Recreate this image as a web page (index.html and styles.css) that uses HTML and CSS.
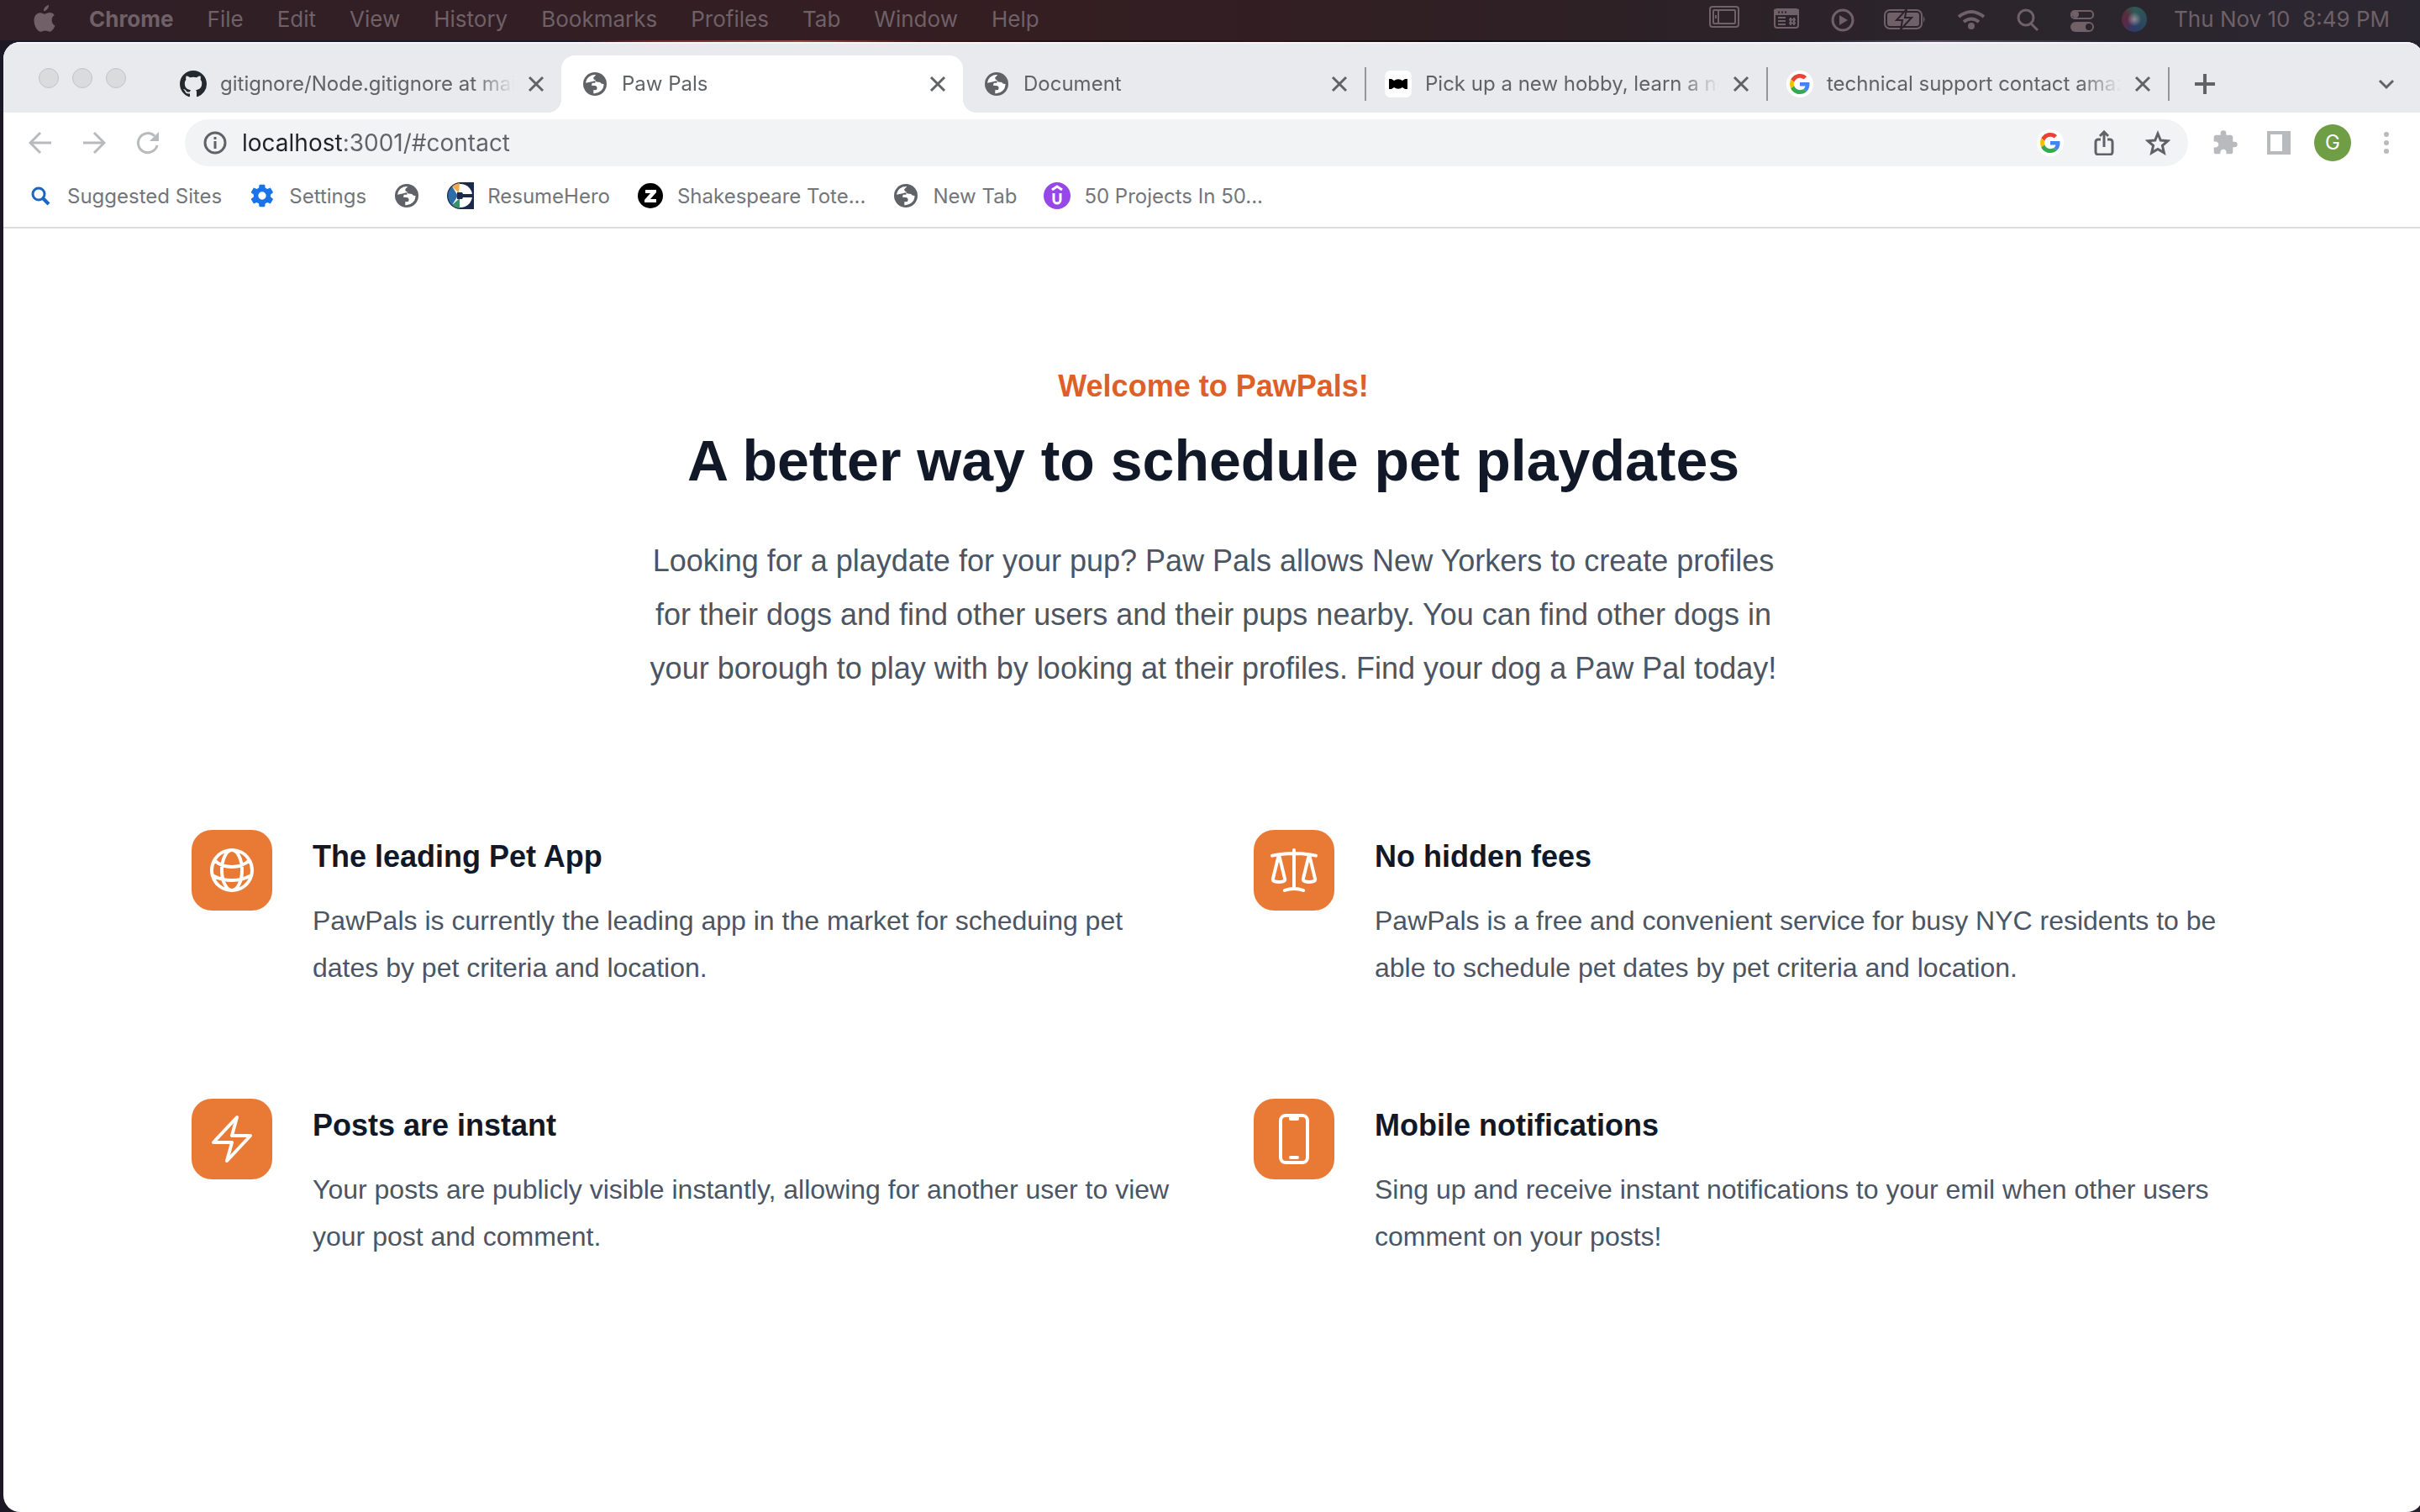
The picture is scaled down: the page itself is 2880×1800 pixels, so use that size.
FILE: index.html
```html
<!DOCTYPE html>
<html lang="en">
<head>
<meta charset="utf-8">
<title>Paw Pals</title>
<link rel="stylesheet" href="styles.css">
</head>
<body>
<svg class="sprite" aria-hidden="true">
  <symbol id="globe" viewBox="0 0 24 24"><circle cx="12" cy="12" r="10.500"/><path fill="#fff" d="M3.800 11A8.300 8.300 0 0 1 13 3.800L10.700 6.200q-.2 2 1.800 2.300l-.2 2.500H9.500l-.5 2.300 3 .2q2 .2 2 2l-.5 1.700-2.800.3v2.900a8.300 8.300 0 0 0 9.200-8.400q-2.500.2-3.200-1.500l-3-.4-2-1-3.500 1z"/></symbol>
  <symbol id="close" viewBox="0 0 20 20"><path d="M2 2l16 16M18 2L2 18" fill="none" stroke="currentColor" stroke-width="3"/></symbol>
  <symbol id="google" viewBox="0 0 48 48"><path fill="#ea4335" d="M24 9.500c3.540 0 6.710 1.220 9.210 3.600l6.850-6.850C35.900 2.380 30.470 0 24 0 14.620 0 6.510 5.380 2.560 13.220l7.980 6.190C12.430 13.720 17.740 9.500 24 9.500z"/><path fill="#4285f4" d="M46.980 24.550c0-1.570-.15-3.090-.38-4.550H24v9.020h12.940c-.58 2.960-2.260 5.480-4.780 7.180l7.730 6c4.510-4.180 7.090-10.360 7.090-17.650z"/><path fill="#fbbc05" d="M10.530 28.590c-.48-1.450-.76-2.990-.76-4.590s.27-3.140.76-4.590l-7.980-6.190C.92 16.460 0 20.120 0 24s.92 7.540 2.560 10.780l7.970-6.190z"/><path fill="#34a853" d="M24 48c6.480 0 11.930-2.130 15.890-5.810l-7.730-6c-2.150 1.450-4.920 2.300-8.160 2.300-6.260 0-11.570-4.220-13.470-9.910l-7.980 6.190C6.510 42.620 14.620 48 24 48z"/></symbol>
</svg>

<header class="menubar">
  <nav class="menus" aria-label="Menu bar">
    <svg class="apple" viewBox="0 0 26 32"><path d="M18 0c.2 3.200-2.600 7-6 7.200C11.700 4 14.600.5 18 0zM25.500 24.600c-1.200 3.200-3.700 7.200-6.200 7.200-2 0-2.800-1.200-5.300-1.200s-3.500 1.200-5.300 1.200C4.600 31.800.5 24.600.5 18.400c0-5.600 3.300-9.200 7.200-9.200 2.300 0 4.100 1.500 5.600 1.500 1.400 0 3.500-1.600 6.200-1.600 2 0 4 1 5.300 2.900-4.700 2.800-4 10.400.7 12.600z"/></svg>
    <button class="menu app-name">Chrome</button>
    <button class="menu">File</button>
    <button class="menu">Edit</button>
    <button class="menu">View</button>
    <button class="menu">History</button>
    <button class="menu">Bookmarks</button>
    <button class="menu">Profiles</button>
    <button class="menu">Tab</button>
    <button class="menu">Window</button>
    <button class="menu">Help</button>
  </nav>
  <div class="status">
    <svg width="46" height="40" viewBox="0 0 46 40" fill="none" stroke="currentColor" stroke-width="2"><rect x="6" y="5" width="34" height="24" rx="3"/><rect x="10" y="9" width="26" height="16" rx="1"/><path d="M16 9v16M13 15v4"/></svg>
    <svg width="40" height="40" viewBox="0 0 40 40" fill="none" stroke="currentColor" stroke-width="2"><rect x="5" y="8" width="28" height="22" rx="3"/><path d="M5 9h28v5H5z" fill="currentColor"/><path d="M9 11.500h2M13 11.500h2M17 11.500h2" stroke="#2c232b"/><path d="M9 18h9M9 22h9M9 26h9M22 20.500h8M22 24.500h8M24 18v9M28 18v9"/></svg>
    <svg width="28" height="40" viewBox="0 0 28 40"><circle cx="14" cy="21" r="12" fill="none" stroke="currentColor" stroke-width="3"/><path d="M10 15l10 6-10 6z" fill="currentColor"/></svg>
    <svg width="56" height="40" viewBox="0 0 56 40"><rect x="4" y="9" width="44" height="22" rx="6" fill="none" stroke="currentColor" stroke-width="2"/><rect x="7" y="12" width="38" height="16" rx="3" fill="currentColor"/><path d="M50 16q3 4 0 8z" fill="currentColor"/><path d="M30 8L18 21h7l-2 11 13-14h-8z" fill="currentColor" class="bolt-cut"/></svg>
    <svg width="38" height="40" viewBox="0 0 38 40" fill="none" stroke="currentColor" stroke-width="4"><path d="M4 17q15-12 30 0M10 23q9-7 18 0"/><circle cx="19" cy="28" r="2"/></svg>
    <svg width="34" height="40" viewBox="0 0 34 40" fill="none" stroke="currentColor" stroke-width="3"><circle cx="14" cy="18" r="9"/><path d="M20 25l8 8"/></svg>
    <svg width="30" height="40" viewBox="0 0 30 40"><rect x="2" y="10" width="26" height="9" rx="4" fill="none" stroke="currentColor" stroke-width="2"/><circle cx="7" cy="14" r="4" fill="currentColor"/><rect x="1" y="23" width="28" height="12" rx="6" fill="currentColor"/><circle cx="23" cy="29" r="4" fill="#2c232b"/></svg>
    <span class="siri"></span>
    <time class="clock">Thu Nov 10&nbsp; 8:49 PM</time>
  </div>
</header>

<div class="window">
  <div class="tabstrip">
    <div class="lights"><i></i><i></i><i></i></div>
    <div class="tabs">
      <div class="tab">
        <svg class="favicon github" viewBox="0 0 16 16"><path d="M8 0C3.580 0 0 3.580 0 8c0 3.540 2.290 6.530 5.470 7.590.4.070.55-.17.55-.38 0-.19-.01-.82-.01-1.490-2.010.37-2.530-.49-2.690-.94-.09-.23-.48-.94-.82-1.130-.28-.15-.68-.52-.01-.53.63-.01 1.080.58 1.230.82.72 1.210 1.870.87 2.330.66.070-.52.28-.87.51-1.070-1.780-.2-3.640-.89-3.640-3.950 0-.87.31-1.590.82-2.150-.08-.2-.36-1.020.08-2.120 0 0 .67-.21 2.200.82.64-.18 1.320-.27 2-.27s1.360.09 2 .27c1.530-1.040 2.200-.82 2.200-.82.44 1.100.16 1.920.08 2.120.51.56.82 1.270.82 2.150 0 3.070-1.870 3.750-3.650 3.950.29.25.54.73.54 1.480 0 1.070-.01 1.930-.01 2.200 0 .21.15.46.55.38A8.010 8.010 0 0016 8c0-4.420-3.580-8-8-8z"/></svg>
        <span class="title">gitignore/Node.gitignore at mai</span>
        <button class="x" aria-label="Close tab"><svg viewBox="0 0 20 20"><use href="#close"/></svg></button>
      </div>
      <div class="tab active">
        <svg class="favicon"><use href="#globe"/></svg>
        <span class="title">Paw Pals</span>
        <button class="x" aria-label="Close tab"><svg viewBox="0 0 20 20"><use href="#close"/></svg></button>
      </div>
      <div class="tab ruled">
        <svg class="favicon"><use href="#globe"/></svg>
        <span class="title">Document</span>
        <button class="x" aria-label="Close tab"><svg viewBox="0 0 20 20"><use href="#close"/></svg></button>
      </div>
      <div class="tab ruled">
        <svg class="favicon" viewBox="0 0 32 32"><rect width="32" height="32" rx="7" fill="#fff"/><path d="M5 10h3l3 2a7 6 0 0 1 10 0l3-2h3v12h-3l-3-2a7 6 0 0 1-10 0l-3 2H5z" fill="#000"/></svg>
        <span class="title">Pick up a new hobby, learn a ne</span>
        <button class="x" aria-label="Close tab"><svg viewBox="0 0 20 20"><use href="#close"/></svg></button>
      </div>
      <div class="tab ruled">
        <svg class="favicon" viewBox="0 0 32 32"><circle cx="16" cy="16" r="16" fill="#fff"/><use href="#google" x="4" y="4" width="24" height="24"/></svg>
        <span class="title">technical support contact amaz</span>
        <button class="x" aria-label="Close tab"><svg viewBox="0 0 20 20"><use href="#close"/></svg></button>
      </div>
    </div>
    <button class="tool" aria-label="New tab"><svg width="24" height="24" viewBox="0 0 24 24"><path d="M12 0v24M0 12h24" stroke="currentColor" stroke-width="4"/></svg></button>
    <button class="tool last" aria-label="Search tabs"><svg width="20" height="14" viewBox="0 0 20 14"><path d="M2 3l8 8 8-8" fill="none" stroke="currentColor" stroke-width="3"/></svg></button>
  </div>

  <div class="toolbar">
    <button class="tool dim" aria-label="Back"><svg width="28" height="28" viewBox="0 0 28 28" fill="none" stroke="currentColor" stroke-width="3"><path d="M27 14H3M14 2L2 14l12 12"/></svg></button>
    <button class="tool dim" aria-label="Forward"><svg width="28" height="28" viewBox="0 0 28 28" fill="none" stroke="currentColor" stroke-width="3"><path d="M1 14h24M14 2l12 12-12 12"/></svg></button>
    <button class="tool dim" aria-label="Reload"><svg width="28" height="28" viewBox="0 0 28 28"><path d="M25 17A11.500 11.500 0 1 1 22 6" fill="none" stroke="currentColor" stroke-width="3"/><path d="M27 1v11H16z" fill="currentColor"/></svg></button>
    <form class="omnibox">
      <svg width="28" height="28" viewBox="0 0 28 28"><circle cx="14" cy="14" r="12" fill="none" stroke="currentColor" stroke-width="3"/><path d="M14 12v9M14 7v3" stroke="currentColor" stroke-width="3"/></svg>
      <input class="url" type="text" aria-label="Address" value="localhost:3001/#contact">
      <button type="button" class="tool" aria-label="Search with Google"><svg width="32" height="32" viewBox="0 0 32 32"><circle cx="16" cy="16" r="16" fill="#fff"/><use href="#google" x="4" y="4" width="24" height="24"/></svg></button>
      <button type="button" class="tool" aria-label="Share"><svg width="24" height="30" viewBox="0 0 24 30" fill="none" stroke="currentColor" stroke-width="3"><path d="M8 11H5a3 3 0 0 0-3 3v12a3 3 0 0 0 3 3h14a3 3 0 0 0 3-3V14a3 3 0 0 0-3-3h-3M12 20V3M7 7l5-5 5 5"/></svg></button>
      <button type="button" class="tool" aria-label="Bookmark"><svg width="30" height="30" viewBox="0 0 30 30"><path d="M15 4l3.300 8 8.700.7-6.600 5.700 2 8.500L15 22.400l-7.400 4.500 2-8.500L3 12.700l8.700-.7z" fill="none" stroke="currentColor" stroke-width="3"/></svg></button>
    </form>
    <button class="tool dim" aria-label="Extensions"><svg width="32" height="32" viewBox="0 0 24 24"><path fill="currentColor" d="M20.500 11H19V7c0-1.100-.9-2-2-2h-4V3.500a2.500 2.500 0 0 0-5 0V5H4c-1.100 0-2 .9-2 2v3.800h1.500c1.500 0 2.700 1.200 2.700 2.700s-1.200 2.700-2.700 2.700H2V20c0 1.100.9 2 2 2h3.800v-1.500c0-1.500 1.200-2.700 2.700-2.700s2.700 1.200 2.700 2.700V22H17c1.100 0 2-.9 2-2v-4h1.500a2.500 2.500 0 0 0 0-5z"/></svg></button>
    <button class="tool dim" aria-label="Side panel"><svg width="28" height="28" viewBox="0 0 28 28"><path fill="currentColor" fill-rule="evenodd" d="M0 0h28v28H0zM4 4v20h14V4z"/></svg></button>
    <button class="tool" aria-label="Profile"><span class="avatar">G</span></button>
    <button class="tool dim" aria-label="More"><svg width="8" height="28" viewBox="0 0 8 28" fill="currentColor"><circle cx="4" cy="4" r="3"/><circle cx="4" cy="14" r="3"/><circle cx="4" cy="24" r="3"/></svg></button>
  </div>

  <nav class="bookmarks" aria-label="Bookmarks">
    <a href="#"><svg viewBox="0 0 32 32" fill="none" stroke="#1a66c0" stroke-width="3"><circle cx="14" cy="14" r="7"/><path d="M18 18l8 8" stroke-width="4"/></svg>Suggested Sites</a>
    <a href="#"><svg viewBox="0 0 24 24"><path fill="#1a73e8" d="M19.400 13c0-.3.100-.6.100-1s0-.7-.1-1l2.100-1.700c.2-.2.200-.4.100-.6l-2-3.500c-.1-.2-.4-.3-.6-.2l-2.500 1c-.5-.4-1.100-.7-1.700-1l-.4-2.600c0-.2-.2-.4-.5-.4h-4c-.2 0-.5.200-.5.400L9 5c-.6.300-1.200.6-1.700 1l-2.500-1c-.2-.1-.5 0-.6.200l-2 3.500c-.1.200-.1.500.1.600L4.500 11c0 .3-.1.600-.1 1s0 .7.100 1l-2.200 1.700c-.2.200-.2.400-.1.600l2 3.500c.1.200.4.300.6.200l2.500-1c.5.400 1.100.7 1.700 1l.4 2.600c0 .2.200.4.500.4h4c.2 0 .5-.2.500-.4l.4-2.600c.6-.3 1.200-.6 1.700-1l2.500 1c.2.100.5 0 .6-.2l2-3.500c.1-.2.100-.5-.1-.6zM12 15.500a3.500 3.500 0 1 1 0-7 3.500 3.500 0 0 1 0 7z"/></svg>Settings</a>
    <a href="#" aria-label="Untitled bookmark"><svg><use href="#globe"/></svg></a>
    <a href="#"><svg viewBox="0 0 32 32"><path d="M16 0h16v32H16A16 16 0 0 1 16 0z" fill="#1b2a4a"/><circle cx="16" cy="16" r="14" fill="#fff"/><path d="M14 13L6 5A15 15 0 0 1 15 1z" fill="#f0ad4e"/><path d="M13 16L6 27A15 15 0 0 1 6 5z" fill="#2d6da8"/><path d="M15 19v12A15 15 0 0 1 6 27z" fill="#3c8f6b"/><path d="M12 12h6l1 2h13v4H19l-1 2h-6z" fill="#1b2a4a"/></svg>ResumeHero</a>
    <a href="#"><svg viewBox="0 0 32 32"><circle cx="16" cy="16" r="15" fill="#000"/><path d="M10 9h13v3l-7 8h7v4H9v-3l7-8h-6z" fill="#fff"/></svg>Shakespeare Tote...</a>
    <a href="#"><svg><use href="#globe"/></svg>New Tab</a>
    <a href="#"><svg viewBox="0 0 32 32"><circle cx="16" cy="16" r="16" fill="#9747e8"/><path d="M10 9l6-4 6 4M12 13v8a4 4 0 0 0 8 0v-8" fill="none" stroke="#fff" stroke-width="3"/></svg>50 Projects In 50...</a>
  </nav>

  <main class="page">
    <section class="intro">
      <h2 class="eyebrow">Welcome to PawPals!</h2>
      <p class="headline">A better way to schedule pet playdates</p>
      <p class="lead">Looking for a playdate for your pup? Paw Pals allows New Yorkers to create profiles for their dogs and find other users and their pups nearby. You can find other dogs in your borough to play with by looking at their profiles. Find your dog a Paw Pal today!</p>
    </section>
    <section class="features">
      <article class="feature">
        <span class="badge"><svg viewBox="0 0 24 24"><path d="M12 21a9.004 9.004 0 008.716-6.747M12 21a9.004 9.004 0 01-8.716-6.747M12 21c2.485 0 4.500-4.030 4.500-9S14.485 3 12 3m0 18c-2.485 0-4.500-4.030-4.500-9S9.515 3 12 3m0 0a8.997 8.997 0 017.843 4.582M12 3a8.997 8.997 0 00-7.843 4.582m15.686 0A11.953 11.953 0 0112 10.500c-2.998 0-5.740-1.100-7.843-2.918m15.686 0A8.959 8.959 0 0121 12c0 .778-.099 1.533-.284 2.253m0 0A17.919 17.919 0 0112 16.500c-3.162 0-6.133-.815-8.716-2.247m0 0A9.015 9.015 0 013 12c0-1.605.42-3.113 1.157-4.418"/></svg></span>
        <div><h3>The leading Pet App</h3><p>PawPals is currently the leading app in the market for scheduing pet dates by pet criteria and location.</p></div>
      </article>
      <article class="feature">
        <span class="badge"><svg viewBox="0 0 24 24"><path d="M12 3v17.250m0 0c-1.472 0-2.882.265-4.185.75M12 20.250c1.472 0 2.882.265 4.185.75M18.750 4.970A48.416 48.416 0 0012 4.500c-2.291 0-4.545.16-6.750.47m13.500 0c1.010.143 2.010.317 3 .52m-3-.52l2.620 10.726c.122.499-.106 1.028-.589 1.202a5.988 5.988 0 01-2.031.352 5.988 5.988 0 01-2.031-.352c-.483-.174-.711-.703-.59-1.202L18.750 4.971zm-16.500.52c.99-.203 1.990-.377 3-.52m0 0l2.620 10.726c.122.499-.106 1.028-.589 1.202a5.989 5.989 0 01-2.031.352 5.989 5.989 0 01-2.031-.352c-.483-.174-.711-.703-.59-1.202L5.250 4.971z"/></svg></span>
        <div><h3>No hidden fees</h3><p>PawPals is a free and convenient service for busy NYC residents to be able to schedule pet dates by pet criteria and location.</p></div>
      </article>
      <article class="feature">
        <span class="badge"><svg viewBox="0 0 24 24"><path d="M3.750 13.500l10.500-11.250L12 10.500h8.250L9.750 21.750 12 13.500H3.750z"/></svg></span>
        <div><h3>Posts are instant</h3><p>Your posts are publicly visible instantly, allowing for another user to view your post and comment.</p></div>
      </article>
      <article class="feature">
        <span class="badge"><svg viewBox="0 0 24 24"><path d="M10.500 1.500H8.250A2.250 2.250 0 006 3.750v16.500a2.250 2.250 0 002.250 2.250h7.500A2.250 2.250 0 0018 20.250V3.750a2.250 2.250 0 00-2.250-2.250H13.500m-3 0V3h3V1.500m-3 0h3m-3 18.750h3"/></svg></span>
        <div><h3>Mobile notifications</h3><p>Sing up and receive instant notifications to your emil when other users comment on your posts!</p></div>
      </article>
    </section>
  </main>
</div>
</body>
</html>
```
FILE: styles.css
```css
* { box-sizing: border-box; }

body {
  margin: 0;
  min-height: 100vh;
  display: flex;
  flex-direction: column;
  overflow-x: hidden;
  font-family: Inter, "Liberation Sans", sans-serif;
  background: linear-gradient(to right, #1c1826 0, #1c1826 24%, #6b2a30 27%, #9a4448 33%, #3a1518 38%, #120b10 48%, #301518 52%, #0e0b10 60%, #24202c 75%, #5a5260 80%, #24202c 88%);
}

h2, h3, p { margin: 0; }

button {
  padding: 0;
  border: 0;
  background: none;
  font: inherit;
  color: inherit;
}

svg { flex: none; fill: currentColor; }
svg[fill="none"] { fill: none; }
.sprite { position: absolute; width: 0; height: 0; }

/* System menu bar */
.menubar {
  height: 48px;
  display: flex;
  justify-content: space-between;
  align-items: center;
  padding: 0 36px 0 40px;
  font-size: 26px;
  line-height: 46px;
  color: #6f6167;
  background: linear-gradient(to right, #301f27, #341e22 40%, #321e22 52%, #2b2329 75%, #2b2731);
}

.menus { display: flex; align-items: center; gap: 40px; padding-bottom: 2px; }
.apple { width: 26px; height: 32px; margin-bottom: 2px; }
.app-name { font-weight: 700; }
.status { display: flex; align-items: center; gap: 32px; padding-bottom: 2px; }
.bolt-cut { stroke: #2b2329; stroke-width: 2; }

.siri {
  width: 30px;
  height: 30px;
  border-radius: 50%;
  background:
    radial-gradient(circle, #8d8a98 0, transparent 40%),
    conic-gradient(#2f5a55, #2c4a5e 30%, #2b3c66 50%, #5a2848 70%, #55303c 85%, #2f5a55);
}

/* Browser window */
.window {
  flex: 1;
  margin: 2px -4px 0 4px;
  border-radius: 20px;
  overflow: hidden;
  background: #fff;
  color: #5f6368;
}

.tabstrip {
  height: 84px;
  display: flex;
  align-items: center;
  padding: 16px 12px 0 42px;
  background: #e8eaed;
  box-shadow: inset 0 2px #f6f6f8;
}

.lights { display: flex; gap: 16px; width: 144px; margin-bottom: 14px; }
.lights i { width: 24px; height: 24px; border-radius: 50%; background: #dadbdc; border: 1px solid #c2c3c5; }

.tabs { display: flex; align-self: stretch; flex: 0 1 2390px; margin-right: 12px; }

.tab {
  position: relative;
  flex: 1;
  min-width: 0;
  display: flex;
  align-items: center;
  gap: 16px;
  padding: 0 20px 0 24px;
  font-size: 24px;
  line-height: 32px;
}

.tab.active { background: #fff; border-radius: 16px 16px 0 0; }

.tab.active::before,
.tab.active::after {
  content: "";
  position: absolute;
  bottom: 0;
  width: 16px;
  height: 16px;
}
.tab.active::before { right: 100%; background: radial-gradient(circle at 0 0, #e8eaed 16px, #fff 16px); }
.tab.active::after { left: 100%; background: radial-gradient(circle at 100% 0, #e8eaed 16px, #fff 16px); }

.tab.ruled::after {
  content: "";
  position: absolute;
  right: -2px;
  width: 2px;
  height: 40px;
  background: #939599;
}

.favicon { width: 32px; height: 32px; }
.github { color: #24292f; }

.title {
  flex: 1;
  min-width: 0;
  overflow: hidden;
  white-space: nowrap;
  -webkit-mask-image: linear-gradient(to right, #000 calc(100% - 48px), transparent);
  mask-image: linear-gradient(to right, #000 calc(100% - 48px), transparent);
}

.x { width: 20px; height: 20px; }
.x svg { display: block; width: 20px; height: 20px; }

.tool { flex: none; width: 64px; height: 56px; display: flex; align-items: center; justify-content: center; }
.tool.last { margin-left: auto; }
.dim { color: #b8babd; }

.toolbar { height: 72px; display: flex; align-items: center; padding: 0 12px; }

.omnibox {
  flex: 1;
  height: 56px;
  margin: 0 12px;
  padding: 0 4px 0 22px;
  display: flex;
  align-items: center;
  border-radius: 28px;
  background: #f1f3f4;
}

.url {
  flex: 1;
  min-width: 0;
  height: 56px;
  margin-left: 18px;
  padding: 0;
  border: 0;
  outline: 0;
  font: 28px/56px Inter, "Liberation Sans", sans-serif;
  color: transparent;
  background: linear-gradient(to right, #202124 122px, #5f6368 122px);
  -webkit-background-clip: text;
  background-clip: text;
}

.avatar {
  width: 44px;
  height: 44px;
  border-radius: 50%;
  background: #6f9e45;
  color: #fff;
  font-size: 24px;
  line-height: 44px;
}

.bookmarks {
  height: 66px;
  display: flex;
  align-items: center;
  gap: 32px;
  padding: 0 28px 10px;
  border-bottom: 2px solid #dadce0;
  font-size: 24px;
}
.bookmarks a { display: flex; align-items: center; gap: 16px; color: #72767b; text-decoration: none; }
.bookmarks svg { width: 32px; height: 32px; color: #5f6368; }

/* PawPals page */
.page {
  max-width: 2560px;
  margin: 0 auto;
  padding: 156px 64px;
  font-family: "Liberation Sans", Arial, sans-serif;
  color: #4b5563;
}

.intro { text-align: center; }
.eyebrow { font-size: 36px; line-height: 64px; color: #dd6029; }
.headline { margin-top: 16px; font-size: 68px; font-weight: 700; line-height: 80px; color: #111827; }
.lead { max-width: 1344px; margin: 48px auto 0; font-size: 36px; line-height: 64px; }

.features {
  display: grid;
  grid-template-columns: 1fr 1fr;
  gap: 128px 96px;
  margin-top: 160px;
}

.feature { display: flex; align-items: flex-start; gap: 48px; }
.feature h3 { font-size: 36px; line-height: 64px; color: #111827; }
.feature p { margin-top: 16px; font-size: 32px; line-height: 56px; }

.badge {
  flex: none;
  width: 96px;
  height: 96px;
  display: grid;
  place-items: center;
  border-radius: 24px;
  background: #e87a35;
}
.badge svg {
  width: 64px;
  height: 64px;
  fill: none;
  stroke: #fff;
  stroke-width: 1.5;
  stroke-linecap: round;
  stroke-linejoin: round;
}
```
